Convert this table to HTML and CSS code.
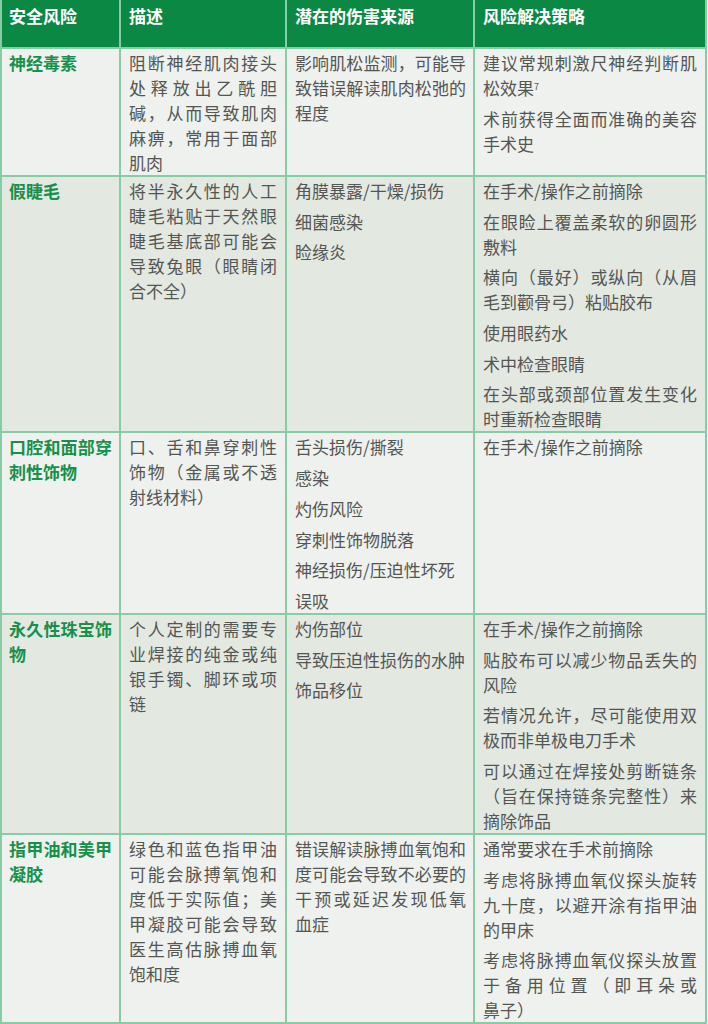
FILE: index.html
```html
<!DOCTYPE html>
<html lang="zh-CN">
<head>
<meta charset="utf-8">
<title>安全风险</title>
<link rel="stylesheet" href="styles.css">
</head>
<body>
<table class="risk">
  <colgroup>
    <col class="c1"><col class="c2"><col class="c3"><col class="c4">
  </colgroup>
  <thead>
    <tr>
      <th class="k">安全风险</th>
      <th>描述</th>
      <th>潜在的伤害来源</th>
      <th>风险解决策略</th>
    </tr>
  </thead>
  <tbody>
    <tr class="odd">
      <td class="k">神经毒素</td>
      <td>阻断神经肌肉接头处释放出乙酰胆碱，从而导致肌肉麻痹，常用于面部肌肉</td>
      <td>影响肌松监测，可能导致错误解读肌肉松弛的程度</td>
      <td><p>建议常规刺激尺神经判断肌松效果<sup>7</sup></p><p>术前获得全面而准确的美容手术史</p></td>
    </tr>
    <tr class="even">
      <td class="k">假睫毛</td>
      <td>将半永久性的人工睫毛粘贴于天然眼睫毛基底部可能会导致兔眼（眼睛闭合不全）</td>
      <td><p>角膜暴露/干燥/损伤</p><p>细菌感染</p><p>睑缘炎</p></td>
      <td><p>在手术/操作之前摘除</p><p>在眼睑上覆盖柔软的卵圆形敷料</p><p>横向（最好）或纵向（从眉毛到颧骨弓）粘贴胶布</p><p>使用眼药水</p><p>术中检查眼睛</p><p>在头部或颈部位置发生变化时重新检查眼睛</p></td>
    </tr>
    <tr class="odd">
      <td class="k">口腔和面部穿刺性饰物</td>
      <td>口、舌和鼻穿刺性饰物（金属或不透射线材料）</td>
      <td><p>舌头损伤/撕裂</p><p>感染</p><p>灼伤风险</p><p>穿刺性饰物脱落</p><p>神经损伤/压迫性坏死</p><p>误吸</p></td>
      <td><p>在手术/操作之前摘除</p></td>
    </tr>
    <tr class="even">
      <td class="k">永久性珠宝饰物</td>
      <td>个人定制的需要专业焊接的纯金或纯银手镯、脚环或项链</td>
      <td><p>灼伤部位</p><p>导致压迫性损伤的水肿</p><p>饰品移位</p></td>
      <td><p>在手术/操作之前摘除</p><p>贴胶布可以减少物品丢失的风险</p><p>若情况允许，尽可能使用双极而非单极电刀手术</p><p>可以通过在焊接处剪断链条（旨在保持链条完整性）来摘除饰品</p></td>
    </tr>
    <tr class="odd">
      <td class="k">指甲油和美甲凝胶</td>
      <td>绿色和蓝色指甲油可能会脉搏氧饱和度低于实际值；美甲凝胶可能会导致医生高估脉搏血氧饱和度</td>
      <td>错误解读脉搏血氧饱和度可能会导致不必要的干预或延迟发现低氧<span class="nw">血症</span></td>
      <td><p>通常要求在手术前摘除</p><p>考虑将脉搏血氧仪探头旋转九十度，以避开涂有指甲油的甲床</p><p>考虑将脉搏血氧仪探头放置于备用位置（即耳朵或<span class="nw">鼻子）</span></p></td>
    </tr>
  </tbody>
</table>
</body>
</html>
```
FILE: styles.css
```css
html, body {
  margin: 0;
  padding: 0;
  background: #ffffff;
}

.risk {
  border-collapse: separate;
  border-spacing: 0;
  table-layout: fixed;
  width: 707px;
  border-left: 2px solid #86cda6;
  font-family: "Noto Sans CJK SC", "Noto Sans", sans-serif;
  font-size: 17px;
  line-height: 25px;
  color: #545654;
}

.c1 { width: 119px; }
.c2 { width: 166px; }
.c3 { width: 188px; }
.c4 { width: 232px; }

.risk th,
.risk td {
  box-sizing: border-box;
  border-right: 2px solid #86cda6;
  border-bottom: 2px solid #86cda6;
  vertical-align: top;
  text-align: justify;
  padding: 1px 8px 0 8px;
}

.risk th {
  background: #0b8944;
  color: #ffffff;
  font-weight: 700;
  height: 49px;
  padding-top: 3px;
  text-align: left;
}

.risk th.k,
.risk td.k {
  padding-left: 7px;
  padding-right: 7px;
}

.risk td.k {
  color: #16904a;
  font-weight: 700;
}

.risk td:nth-child(3) {
  padding-right: 7px;
}

.odd td { background: #eef1ed; }
.even td { background: #e3e8e1; }

.risk p {
  margin: 0 0 5.7px 0;
}

.risk p:last-child {
  margin-bottom: 0;
}

.risk sup {
  font-size: 9px;
  line-height: 1;
  vertical-align: 5px;
}

.nw {
  white-space: nowrap;
}
```
